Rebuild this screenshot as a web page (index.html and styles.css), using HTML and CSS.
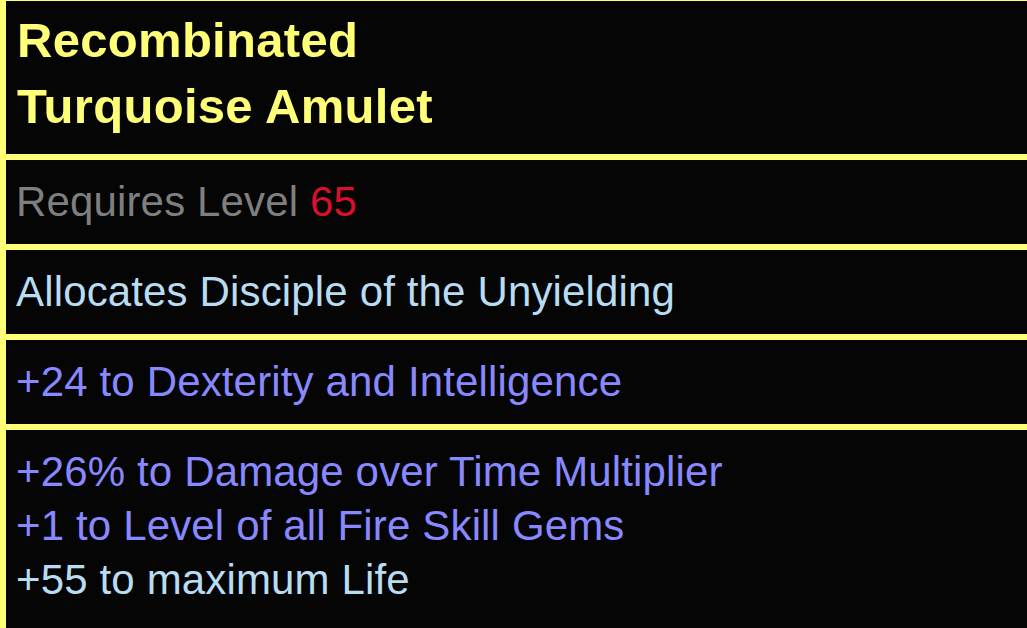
FILE: index.html
```html
<!DOCTYPE html>
<html lang="en">
<head>
  <meta charset="UTF-8">
  <meta content="width=device-width, initial-scale=1.0" name="viewport">
  <title>Recombinated Turquoise Amulet</title>
  <link rel="stylesheet" href="styles.css">
</head>
<body>
<div class="item-tooltip">

  <!-- item name -->
  <div class="item-section item-name">
    <div>Recombinated</div>
    <div>Turquoise Amulet</div>
  </div>

  <!-- requirements -->
  <div class="item-section">
    <span class="req-label">Requires Level</span> <span class="req-value">65</span>
  </div>

  <!-- enchant -->
  <div class="item-section mod-plain">Allocates Disciple of the Unyielding</div>

  <!-- implicit -->
  <div class="item-section mod-magic">+24 to Dexterity and Intelligence</div>

  <!-- explicit mods -->
  <div class="item-section">
    <div class="mod-magic">+26% to Damage over Time Multiplier</div>
    <div class="mod-magic">+1 to Level of all Fire Skill Gems</div>
    <div class="mod-plain">+55 to maximum Life</div>
  </div>
</div>
</body>
</html>
```

FILE: styles.css
```css
:root{
  --tip-border: #ffff77;
  --tip-background: #050505;
  --name-color: #ffff77;
  --req-color: #7f7f7f;
  --req-value-color: #d8102c;
  --plain-color: #b8dcf2;
  --magic-color: #8888ff;
}

html, body{
  margin: 0;
  height: 100%;
  background-color: var(--tip-background);
  overflow: hidden;
}

.item-tooltip{
  min-height: 100%;
  box-sizing: border-box;
  border-top: 1px solid var(--tip-border);
  border-left: 6px solid var(--tip-border);
  background-color: var(--tip-background);
  font-family: 'Liberation Sans', Arial, sans-serif;
}

.item-section{
  padding: 15px 16px 15px 10px;
  font-size: 42px;
  line-height: 54px;
  letter-spacing: 0.15px;
  white-space: nowrap;
}

.item-section + .item-section{
  border-top: 6px solid var(--tip-border);
}

/* name block */
.item-name{
  padding: 6px 16px 15px 11px;
  font-size: 49px;
  font-weight: 700;
  line-height: 66px;
  letter-spacing: 0.3px;
  color: var(--name-color);
}

.req-label{
  color: var(--req-color);
}

.req-value{
  color: var(--req-value-color);
}

.mod-plain{
  color: var(--plain-color);
}

.mod-magic{
  color: var(--magic-color);
}
```
